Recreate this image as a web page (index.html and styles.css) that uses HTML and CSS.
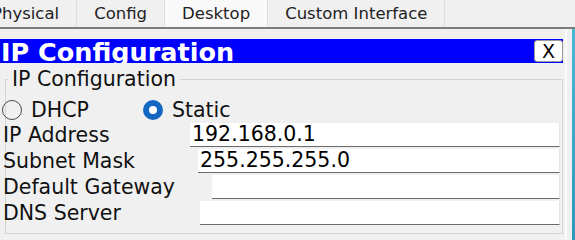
FILE: index.html
```html
<!DOCTYPE html>
<html>
<head>
    <title>IP Configuration</title>
    <link rel="stylesheet" href="styles.css">
</head>
<body>

<div class="tabs">
    <div class="tab first">Physical</div>
    <div class="tab">Config</div>
    <div class="tab selected">Desktop</div>
    <div class="tab">Custom Interface</div>
</div>

<div class="frame">
    <div class="panel">
        <div class="titlebar">
            <h1>IP Configuration</h1>
            <span class="close">X</span>
        </div>

        <fieldset>
            <legend>IP Configuration</legend>
            <div class="fields">
                <div class="mode">
                    <label class="option"><span class="radio"></span>DHCP</label>
                    <label class="option static"><span class="radio checked"></span>Static</label>
                </div>
                <div class="row">
                    <label>IP Address</label>
                    <div class="field ip">192.168.0.1</div>
                </div>
                <div class="row">
                    <label>Subnet Mask</label>
                    <div class="field mask">255.255.255.0</div>
                </div>
                <div class="row">
                    <label>Default Gateway</label>
                    <div class="field gateway"></div>
                </div>
                <div class="row">
                    <label>DNS Server</label>
                    <div class="field dns"></div>
                </div>
            </div>
        </fieldset>
    </div>
    <div class="rule"></div>
    <div class="edge"></div>
</div>

</body>
</html>
```

FILE: styles.css
```css
body, html {
    margin: 0;
    height: 240px;
    overflow: hidden;
    background-color: #F0F0F0;
    font-family: "DejaVu Sans", Verdana, sans-serif;
    color: #111;
}

/* tab strip */
.tabs {
    display: flex;
    height: 27px;
    border-bottom: 2px solid #7C7C7C;
    white-space: nowrap;
}

.tab {
    padding: 0 17px;
    font-size: 16.5px;
    line-height: 27px;
    color: #222;
    border-right: 1px solid #DEDEDE;
}

.tab.first {
    margin-left: -25px;
}

.tab.selected {
    background-color: #F9F9F9;
}

/* window area */
.frame {
    display: flex;
    height: 211px;
}

.panel {
    width: 563px;
    padding-top: 10px;
}

.rule {
    width: 2px;
    margin-left: 2px;
    background-color: #FAFAFA;
}

.edge {
    flex: 1;
    margin-left: 5px;
    background: linear-gradient(#4DB8D4, #2F98B8);
}

.titlebar {
    display: flex;
    align-items: center;
    justify-content: space-between;
    height: 24px;
    background-color: #0000FF;
}

.titlebar h1 {
    margin: 0;
    padding-left: 1px;
    height: 24px;
    overflow: hidden;
    font-size: 25.5px;
    line-height: 26px;
    font-weight: bold;
    color: #fff;
}

.close {
    box-sizing: border-box;
    width: 29px;
    height: 22px;
    background-color: #fff;
    border: 1px solid #9A9A9A;
    border-radius: 3px;
    font-size: 19px;
    line-height: 20px;
    text-align: center;
    color: #000;
}

/* group box */
fieldset {
    margin: 6px 0 0 5px;
    padding: 9px 0 7px 0;
    border: 1px solid #D4D4D4;
    font-size: 20.5px;
}

legend {
    margin-left: 2px;
    padding: 0 4px;
    line-height: 20px;
}

.fields {
    margin-left: -4px;
    margin-right: 2px;
}

.mode {
    display: flex;
    align-items: center;
    height: 24px;
}

.option {
    display: flex;
    align-items: center;
    gap: 9px;
}

.option.static {
    margin-left: 54px;
}

.radio {
    box-sizing: border-box;
    width: 20px;
    height: 20px;
    border: 1px solid #4A4A4A;
    border-radius: 50%;
}

.radio.checked {
    border: 6px solid #1366C1;
    background-color: #fff;
}

.row {
    display: flex;
    align-items: center;
    height: 26px;
    line-height: 26px;
}

.row label {
    flex: none;
    width: 187px;
    padding-left: 1px;
}

.field {
    box-sizing: border-box;
    flex: 1;
    height: 24px;
    padding-left: 2px;
    line-height: 23px;
    background-color: #fff;
    border-bottom: 1px solid #6A6A6A;
    border-right: 1px solid #E4E4E4;
    color: #000;
}

.field.mask    { margin-left: 8px; }
.field.gateway { margin-left: 22px; }
.field.dns     { margin-left: 10px; }
```
